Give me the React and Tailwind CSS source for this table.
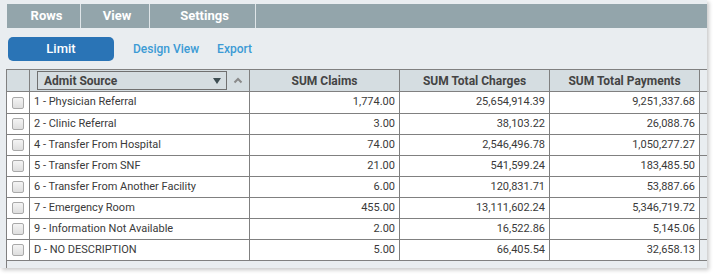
import React from "react";

const rows = [
  ["1 - Physician Referral", "1,774.00", "25,654,914.39", "9,251,337.68"],
  ["2 - Clinic Referral", "3.00", "38,103.22", "26,088.76"],
  ["4 - Transfer From Hospital", "74.00", "2,546,496.78", "1,050,277.27"],
  ["5 - Transfer From SNF", "21.00", "541,599.24", "183,485.50"],
  ["6 - Transfer From Another Facility", "6.00", "120,831.71", "53,887.66"],
  ["7 - Emergency Room", "455.00", "13,111,602.24", "5,346,719.72"],
  ["9 - Information Not Available", "2.00", "16,522.86", "5,145.06"],
  ["D - NO DESCRIPTION", "5.00", "66,405.54", "32,658.13"],
];

function Checkbox() {
  return (
    <div className="w-[12px] h-[12px] rounded-[2px] border border-[#a9a9a9] bg-gradient-to-b from-[#f4f4f4] to-[#dedede]" />
  );
}

export default function App() {
  return (
    <div className="w-[717px] h-[277px] bg-white font-['Roboto',sans-serif] overflow-hidden">
      <div className="w-[707px] h-[268px] bg-[#e9edf0] shadow-[2px_2px_4px_rgba(0,0,0,0.22)] pt-[4px] flex flex-col">
        {/* Tabs */}
        <div className="ml-[7px] h-[24px] bg-[#93a5ab] flex text-white font-bold text-[13px]">
          <div className="w-[74px] border-r border-[#dfe5e8] flex items-center justify-center pl-[6px]">Rows</div>
          <div className="w-[69px] border-r border-[#dfe5e8] flex items-center justify-center pl-[4px]">View</div>
          <div className="w-[106px] border-r border-[#dfe5e8] flex items-center justify-center pl-[4px]">Settings</div>
        </div>
        {/* Toolbar */}
        <div className="mt-[9px] ml-[8px] h-[24px] flex items-center">
          <div className="w-[106px] h-[24px] rounded-[5px] bg-[#2a74b6] text-white text-[13px] font-medium flex items-center justify-center">
            Limit
          </div>
          <span className="ml-[19px] text-[12px] font-medium text-[#3c9bd5]">Design View</span>
          <span className="ml-[18px] text-[12px] font-medium text-[#3c9bd5]">Export</span>
        </div>
        {/* Table */}
        <div className="mt-[8px] ml-[6px] w-[701px] flex-1 border-t border-l border-[#808080] flex flex-col">
          <div className="h-[22px] flex border-b border-[#808080]">
            <div className="w-[23px] bg-[#d5dde1] border-r border-[#808080]" />
            <div className="w-[220px] bg-[#d5dde1] border-r border-[#808080] flex items-center pl-[7px]">
              <div className="w-[190px] h-[19px] border border-[#707070] flex items-center pl-[6px] pr-[5px] text-[12px] font-bold text-[#444]">
                <span className="flex-1">Admit Source</span>
                <svg width="8" height="6" viewBox="0 0 8 6"><path d="M0 0 L8 0 L4 6 Z" fill="#3d4d52" /></svg>
              </div>
              <svg className="ml-[6px]" width="10" height="7" viewBox="0 0 10 7">
                <path d="M1.5 5.5 L5 2 L8.5 5.5" fill="none" stroke="#8a8a8a" strokeWidth="2" />
              </svg>
            </div>
            {["SUM Claims", "SUM Total Charges", "SUM Total Payments"].map((h) => (
              <div key={h} className="w-[150px] bg-[#d5dde1] border-r border-[#808080] flex items-center justify-center text-[12px] font-bold text-[#444]">
                {h}
              </div>
            ))}
          </div>
          {rows.map((r, i) => (
            <div key={i} className={`${i === 0 ? "h-[22px]" : "h-[21px]"} flex border-b border-[#808080]`}>
              <div className="w-[23px] bg-white border-r border-[#808080] flex items-center justify-center">
                <Checkbox />
              </div>
              <div className="w-[220px] bg-white border-r border-[#808080] flex items-center pl-[4px] text-[11px] text-[#3a3a3a]">
                {r[0]}
              </div>
              {r.slice(1).map((v, j) => (
                <div key={j} className="w-[150px] bg-white border-r border-[#808080] flex items-center justify-end pr-[4px] text-[11px] text-[#3a3a3a]">
                  {v}
                </div>
              ))}
            </div>
          ))}
        </div>
      </div>
    </div>
  );
}
